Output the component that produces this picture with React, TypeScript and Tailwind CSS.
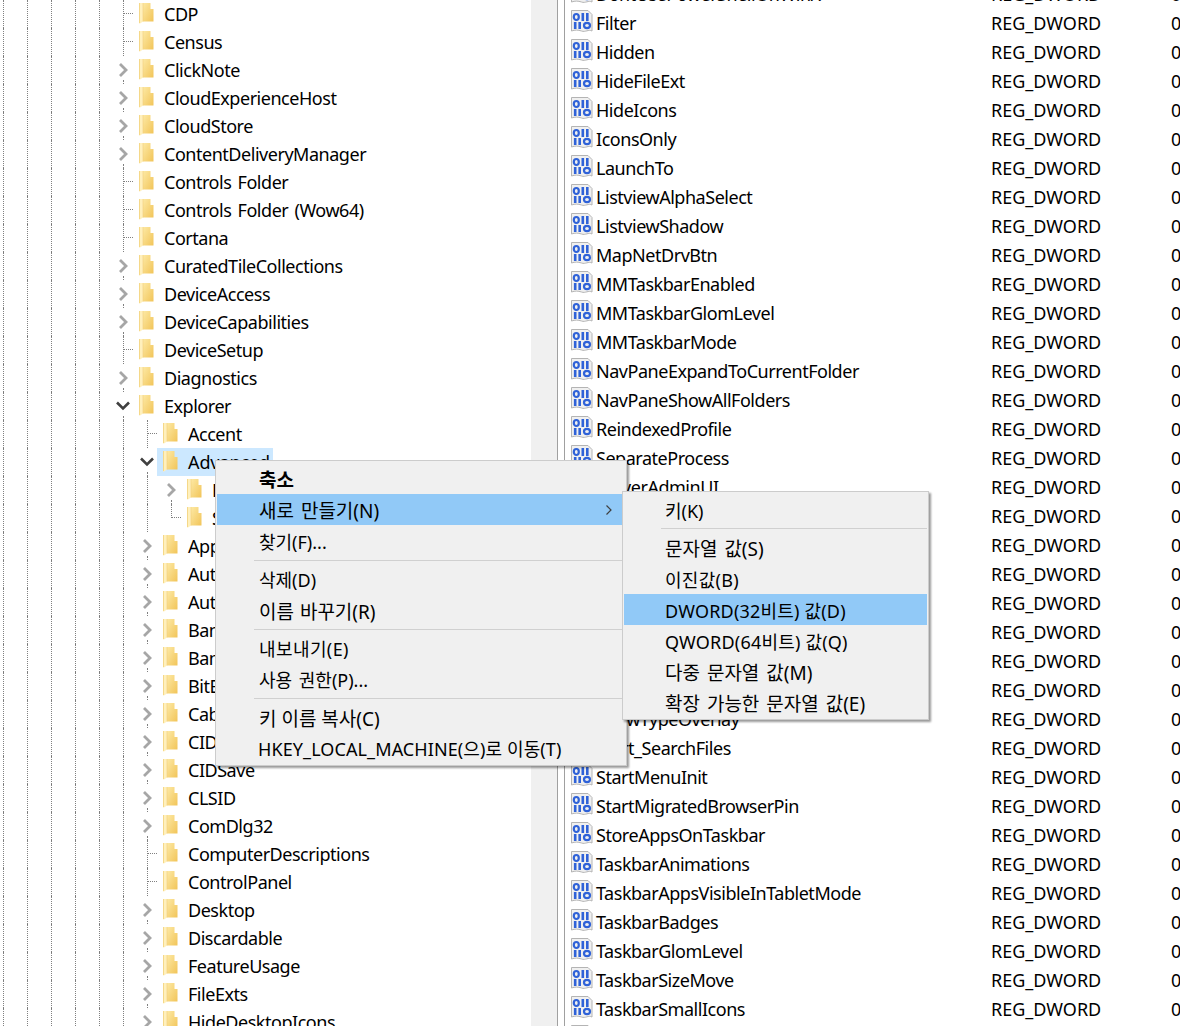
type TreeItem = {
  name: string;
  depth: number;
  kind: 'leaf' | 'last' | 'closed' | 'open';
  selected?: boolean;
};

const leaf = (name: string, depth = 5): TreeItem => ({ name, depth, kind: 'leaf' });
const closed = (name: string, depth = 6): TreeItem => ({ name, depth, kind: 'closed' });

const treeItems: TreeItem[] = [
  leaf('CDP'),
  leaf('Census'),
  closed('ClickNote', 5),
  closed('CloudExperienceHost', 5),
  closed('CloudStore', 5),
  closed('ContentDeliveryManager', 5),
  leaf('Controls Folder'),
  leaf('Controls Folder (Wow64)'),
  leaf('Cortana'),
  closed('CuratedTileCollections', 5),
  closed('DeviceAccess', 5),
  closed('DeviceCapabilities', 5),
  leaf('DeviceSetup'),
  closed('Diagnostics', 5),
  { name: 'Explorer', depth: 5, kind: 'open' },
  leaf('Accent', 6),
  { name: 'Advanced', depth: 6, kind: 'open', selected: true },
  closed('Folder', 7),
  { name: 'StartMode', depth: 7, kind: 'last' },
  closed('AppContract'),
  closed('AutoComplete'),
  closed('AutoplayHandlers'),
  closed('BamThrottling'),
  closed('BannerStore'),
  closed('BitBucket'),
  closed('CabinetState'),
  closed('CIDOpen'),
  closed('CIDSave'),
  closed('CLSID'),
  closed('ComDlg32'),
  leaf('ComputerDescriptions', 6),
  leaf('ControlPanel', 6),
  closed('Desktop'),
  closed('Discardable'),
  closed('FeatureUsage'),
  closed('FileExts'),
  closed('HideDesktopIcons'),
];

const values = [
  'DontUsePowerShellOnWinX',
  'Filter',
  'Hidden',
  'HideFileExt',
  'HideIcons',
  'IconsOnly',
  'LaunchTo',
  'ListviewAlphaSelect',
  'ListviewShadow',
  'MapNetDrvBtn',
  'MMTaskbarEnabled',
  'MMTaskbarGlomLevel',
  'MMTaskbarMode',
  'NavPaneExpandToCurrentFolder',
  'NavPaneShowAllFolders',
  'ReindexedProfile',
  'SeparateProcess',
  'ServerAdminUI',
  'ShowCompColor',
  'ShowCortanaButton',
  'ShowInfoTip',
  'ShowSecondsInSystemClock',
  'ShowStatusBar',
  'ShowSuperHidden',
  'ShowTaskViewButton',
  'ShowTypeOverlay',
  'Start_SearchFiles',
  'StartMenuInit',
  'StartMigratedBrowserPin',
  'StoreAppsOnTaskbar',
  'TaskbarAnimations',
  'TaskbarAppsVisibleInTabletMode',
  'TaskbarBadges',
  'TaskbarGlomLevel',
  'TaskbarSizeMove',
  'TaskbarSmallIcons',
  'WebView',
];

function FolderIcon() {
  return (
    <svg width="15" height="22" viewBox="0 1 15 22" className="shrink-0">
      <defs>
        <linearGradient id="folder-body" x1="0" y1="0" x2="1" y2="0.9">
          <stop offset="0" stopColor="#fde9a4" />
          <stop offset="1" stopColor="#f2c65c" />
        </linearGradient>
      </defs>
      <path d="M4 1H11.5V7H14.5V19.5H4Z" fill="url(#folder-body)" />
      <path d="M0 1H4V19.5L1 21.5H0Z" fill="#fff0bc" />
      <path d="M0.5 1V21" stroke="#f3d27c" strokeWidth="0.8" />
      <path d="M4 1V19.5" stroke="#f1cf7a" strokeWidth="0.6" />
    </svg>
  );
}

function Expander({ kind }: { kind: TreeItem['kind'] }) {
  if (kind === 'open') {
    return (
      <svg width="16" height="12" viewBox="0 0 16 12" className="absolute left-[-8px] top-[8px]">
        <path d="M2 2.5L8 8.5L14 2.5" fill="none" stroke="#404040" strokeWidth="2.6" />
      </svg>
    );
  }
  return (
    <svg width="12" height="16" viewBox="0 0 12 16" className="absolute left-[-6px] top-[6px]">
      <path d="M3 2L9 8L3 14" fill="none" stroke="#a6a6a6" strokeWidth="2.8" />
    </svg>
  );
}

function TreeRow({ item }: { item: TreeItem }) {
  const hasBranch = item.kind === 'leaf' || item.kind === 'last';
  return (
    <div className="flex h-[28px] items-center whitespace-nowrap pl-[3px]">
      {Array.from({ length: item.depth }).map((_, i) => (
        <span key={i} className="h-full w-[24px] shrink-0 border-l border-dotted border-[#808080]" />
      ))}
      <span className="relative h-full w-[10px] shrink-0">
        {hasBranch ? (
          <>
            <span
              className={
                item.kind === 'last'
                  ? 'absolute left-0 top-0 h-[14px] border-l border-dotted border-[#808080]'
                  : 'absolute left-0 top-0 h-full border-l border-dotted border-[#808080]'
              }
            />
            <span className="absolute left-0 top-[13px] w-[10px] border-t border-dotted border-[#808080]" />
          </>
        ) : (
          <>
            <span className="absolute bottom-0 left-0 h-[4px] border-l border-dotted border-[#808080]" />
            <Expander kind={item.kind} />
          </>
        )}
      </span>
      <span className={`flex h-full items-center pl-[6px] pr-[3px] ${item.selected ? 'bg-[#cce8ff]' : ''}`}>
        <span className="flex w-[25px] shrink-0">
          <FolderIcon />
        </span>
        <span className={item.selected ? 'tracking-[-0.1px]' : 'tracking-[-0.47px] [word-spacing:2px]'}>{item.name}</span>
      </span>
    </div>
  );
}

function BinaryIcon() {
  return (
    <svg width="23" height="23" viewBox="0 0 23 23" className="mb-[3px] shrink-0">
      <path
        d="M1.5 0.5H18L22 4.5V21C18.5 19 15.5 22.5 11.5 21C8 19.8 5 19.8 1.5 21Z"
        fill="#f0f0f0"
        stroke="#b4b4b4"
      />
      <ellipse cx="6.3" cy="7" rx="2.5" ry="3" fill="none" stroke="#2f62d8" strokeWidth="2.2" />
      <path d="M12.8 3V11M17.3 3V11" stroke="#2f62d8" strokeWidth="2.6" />
      <path d="M5.2 12V19M9.7 12V19" stroke="#2f62d8" strokeWidth="2.6" />
      <ellipse cx="17" cy="15.5" rx="3" ry="2.6" fill="none" stroke="#2f62d8" strokeWidth="2.2" />
    </svg>
  );
}

function ValueRow({ name }: { name: string }) {
  return (
    <div className="flex h-[29px] items-center whitespace-nowrap">
      <span className="flex w-[426px] shrink-0 items-center gap-[3px] pl-[5px]">
        <BinaryIcon />
        <span className="tracking-[-0.47px]">{name}</span>
      </span>
      <span className="w-[180px] shrink-0">REG_DWORD</span>
      <span>0x00000000 (0)</span>
    </div>
  );
}

function MenuItem({
  label,
  active,
  bold,
  arrow,
  textClass,
}: {
  label: string;
  active?: boolean;
  bold?: boolean;
  arrow?: boolean;
  textClass?: string;
}) {
  return (
    <div
      className={`flex h-[31px] items-center justify-between whitespace-nowrap pl-[41px] pr-[11px] text-black ${
        active ? 'bg-[#91c9f7]' : ''
      } ${bold ? 'font-bold' : ''}`}
    >
      <span className={textClass}>{label}</span>
      {arrow && (
        <svg width="8" height="12" viewBox="0 0 8 12" className="mr-[1px]">
          <path d="M1.5 1.5L6 6L1.5 10.5" fill="none" stroke="#404040" strokeWidth="1.2" />
        </svg>
      )}
    </div>
  );
}

function MenuSeparator({ height }: { height: string }) {
  return (
    <div className={`flex items-center pl-[37px] ${height}`}>
      <div className="h-px w-full bg-[#d0d0d0]" />
    </div>
  );
}

export default function App() {
  return (
    <div className="relative flex h-screen overflow-hidden bg-white font-['Noto_Sans','Noto_Sans_CJK_KR',sans-serif] text-[18px] leading-none text-black">
      <div className="h-full w-[531px] shrink-0 overflow-hidden">
        {treeItems.map((item) => (
          <TreeRow key={item.name} item={item} />
        ))}
      </div>
      <div className="h-full w-[27px] shrink-0 border-r border-[#a0a0a0] bg-[#f0f0f0]" />
      <div className="h-full w-[7px] shrink-0 border-r border-[#a0a0a0]" />
      <div className="-mt-[21px] min-w-0 flex-1 overflow-hidden">
        {values.map((name) => (
          <ValueRow key={name} name={name} />
        ))}
      </div>

      <div className="absolute left-[215px] top-[460px] w-[412px] border border-[#cccccc] bg-[#f0f0f0] p-px pt-[2px] shadow-[2px_2px_2px_rgba(0,0,0,0.4)]">
        <MenuItem label="축소" bold textClass="ml-px mt-[4px] text-[19px]" />
        <MenuItem label="새로 만들기(N)" active arrow textClass="ml-px mt-[4px] text-[19px] [word-spacing:2px]" />
        <MenuItem label="찾기(F)..." textClass="ml-px mt-[2px]" />
        <MenuSeparator height="h-[8px]" />
        <MenuItem label="삭제(D)" textClass="ml-px" />
        <MenuItem label="이름 바꾸기(R)" textClass="ml-px mt-[4px] text-[19px] [word-spacing:1px]" />
        <MenuSeparator height="h-[7px]" />
        <MenuItem label="내보내기(E)" textClass="ml-px tracking-[0.4px]" />
        <MenuItem label="사용 권한(P)..." textClass="ml-px [word-spacing:2px]" />
        <MenuSeparator height="h-[7px]" />
        <MenuItem label="키 이름 복사(C)" textClass="ml-px mt-[4px] text-[19px]" />
        <MenuItem label="HKEY_LOCAL_MACHINE(으)로 이동(T)" textClass="tracking-[0.1px]" />
      </div>

      <div className="absolute left-[622px] top-[491px] w-[307px] border border-[#cccccc] bg-[#f0f0f0] p-px pt-[2px] shadow-[2px_2px_2px_rgba(0,0,0,0.4)]">
        <MenuItem label="키(K)" textClass="mt-[2px]" />
        <MenuSeparator height="h-[7px]" />
        <MenuItem label="문자열 값(S)" textClass="mt-[4px] text-[19px] [word-spacing:2px]" />
        <MenuItem label="이진값(B)" textClass="mt-[2px] tracking-[0.3px]" />
        <MenuItem label="DWORD(32비트) 값(D)" active textClass="mt-[2px] tracking-[0.2px]" />
        <MenuItem label="QWORD(64비트) 값(Q)" textClass="mt-[2px] tracking-[0.2px]" />
        <MenuItem label="다중 문자열 값(M)" textClass="mt-[4px] text-[19px] [word-spacing:2px]" />
        <MenuItem label="확장 가능한 문자열 값(E)" textClass="mt-[4px] text-[19px] [word-spacing:2px]" />
      </div>
    </div>
  );
}
